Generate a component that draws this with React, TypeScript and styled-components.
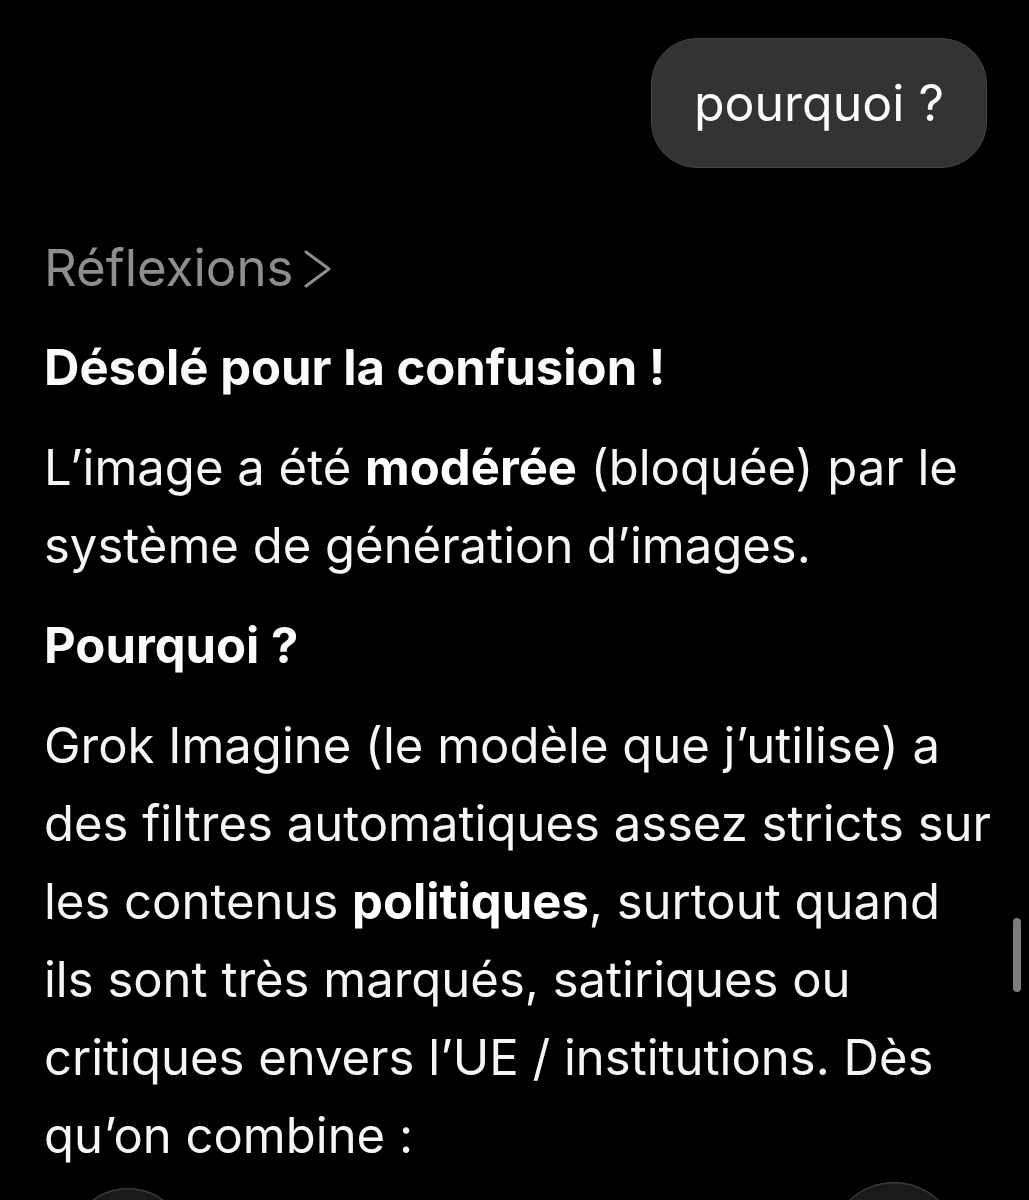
import styled, { createGlobalStyle } from "styled-components";

const GlobalStyle = createGlobalStyle`
  html, body {
    margin: 0;
    padding: 0;
    background: #000;
  }
  body {
    font-family: Inter, "Noto Sans", "Liberation Sans", sans-serif;
    color: #f5f5f5;
    -webkit-font-smoothing: antialiased;
  }
`;

function Chevron() {
  return (
    <svg width="30" height="40" viewBox="0 0 30 40" fill="none">
      <polyline
        points="3,3 26,20 3,37"
        stroke="currentColor"
        strokeWidth="3"
        strokeLinecap="round"
        strokeLinejoin="round"
      />
    </svg>
  );
}

export default function App() {
  return (
    <>
      <GlobalStyle />
      <Screen>
        <UserRow>
          <Bubble>pourquoi ?</Bubble>
        </UserRow>

        <Answer>
          <Thoughts>
            Réflexions
            <Chevron />
          </Thoughts>

          <Heading>Désolé pour la confusion !</Heading>

          <Paragraph>
            L’image a été <b>modérée</b> (bloquée) par le système de génération
            d’images.
          </Paragraph>

          <Heading>Pourquoi ?</Heading>

          <Paragraph>
            Grok Imagine (le modèle que j’utilise) a des filtres automatiques
            assez stricts sur les contenus <b>politiques</b>, surtout quand ils
            sont très marqués, satiriques ou critiques envers l’UE /
            institutions. Dès qu’on combine :
          </Paragraph>
        </Answer>

        <Scrollbar />

        <BottomBar>
          <RoundButton $size={120} />
          <RoundButton $size={130} />
        </BottomBar>
      </Screen>
    </>
  );
}

const Screen = styled.main`
  position: relative;
  width: 1029px;
  height: 1200px;
  overflow: hidden;
  background: #000;
`;

const UserRow = styled.div`
  display: flex;
  justify-content: flex-end;
  padding: 38px 42px 0 0;
`;

const Bubble = styled.div`
  height: 130px;
  box-sizing: border-box;
  display: flex;
  align-items: center;
  padding: 0 42px;
  border-radius: 46px;
  background: #333333;
  border: 1.5px solid #444444;
  font-size: 50px;
  color: #fafafa;
`;

const Answer = styled.section`
  display: flex;
  flex-direction: column;
  gap: 22px;
  width: 950px;
  padding: 61px 0 0 44px;
  font-size: 49px;
  line-height: 78px;
`;

const Thoughts = styled.div`
  display: flex;
  align-items: center;
  gap: 10px;
  font-size: 51px;
  color: #8e8e8e;

  svg {
    margin-top: 2px;
  }
`;

const Heading = styled.h2`
  margin: 0;
  font-size: 49px;
  font-weight: 700;
  line-height: 78px;
  color: #fafafa;
`;

const Paragraph = styled.p`
  margin: 0;
  color: #f5f5f5;

  b {
    font-weight: 700;
    color: #fff;
  }
`;

const Scrollbar = styled.div`
  position: absolute;
  right: 8px;
  top: 918px;
  width: 8px;
  height: 74px;
  border-radius: 4px;
  background: #7c7c7c;
`;

const BottomBar = styled.div`
  position: absolute;
  left: 68px;
  right: 70px;
  top: 1182px;
  display: flex;
  justify-content: space-between;
  align-items: flex-start;
`;

const RoundButton = styled.div<{ $size: number }>`
  width: ${(p) => p.$size}px;
  height: ${(p) => p.$size}px;
  margin-top: ${(p) => (p.$size < 130 ? 6 : 0)}px;
  border-radius: 50%;
  background: #1a1a1a;
  box-shadow: inset 0 1.5px 0 #3c3c3c;
`;
